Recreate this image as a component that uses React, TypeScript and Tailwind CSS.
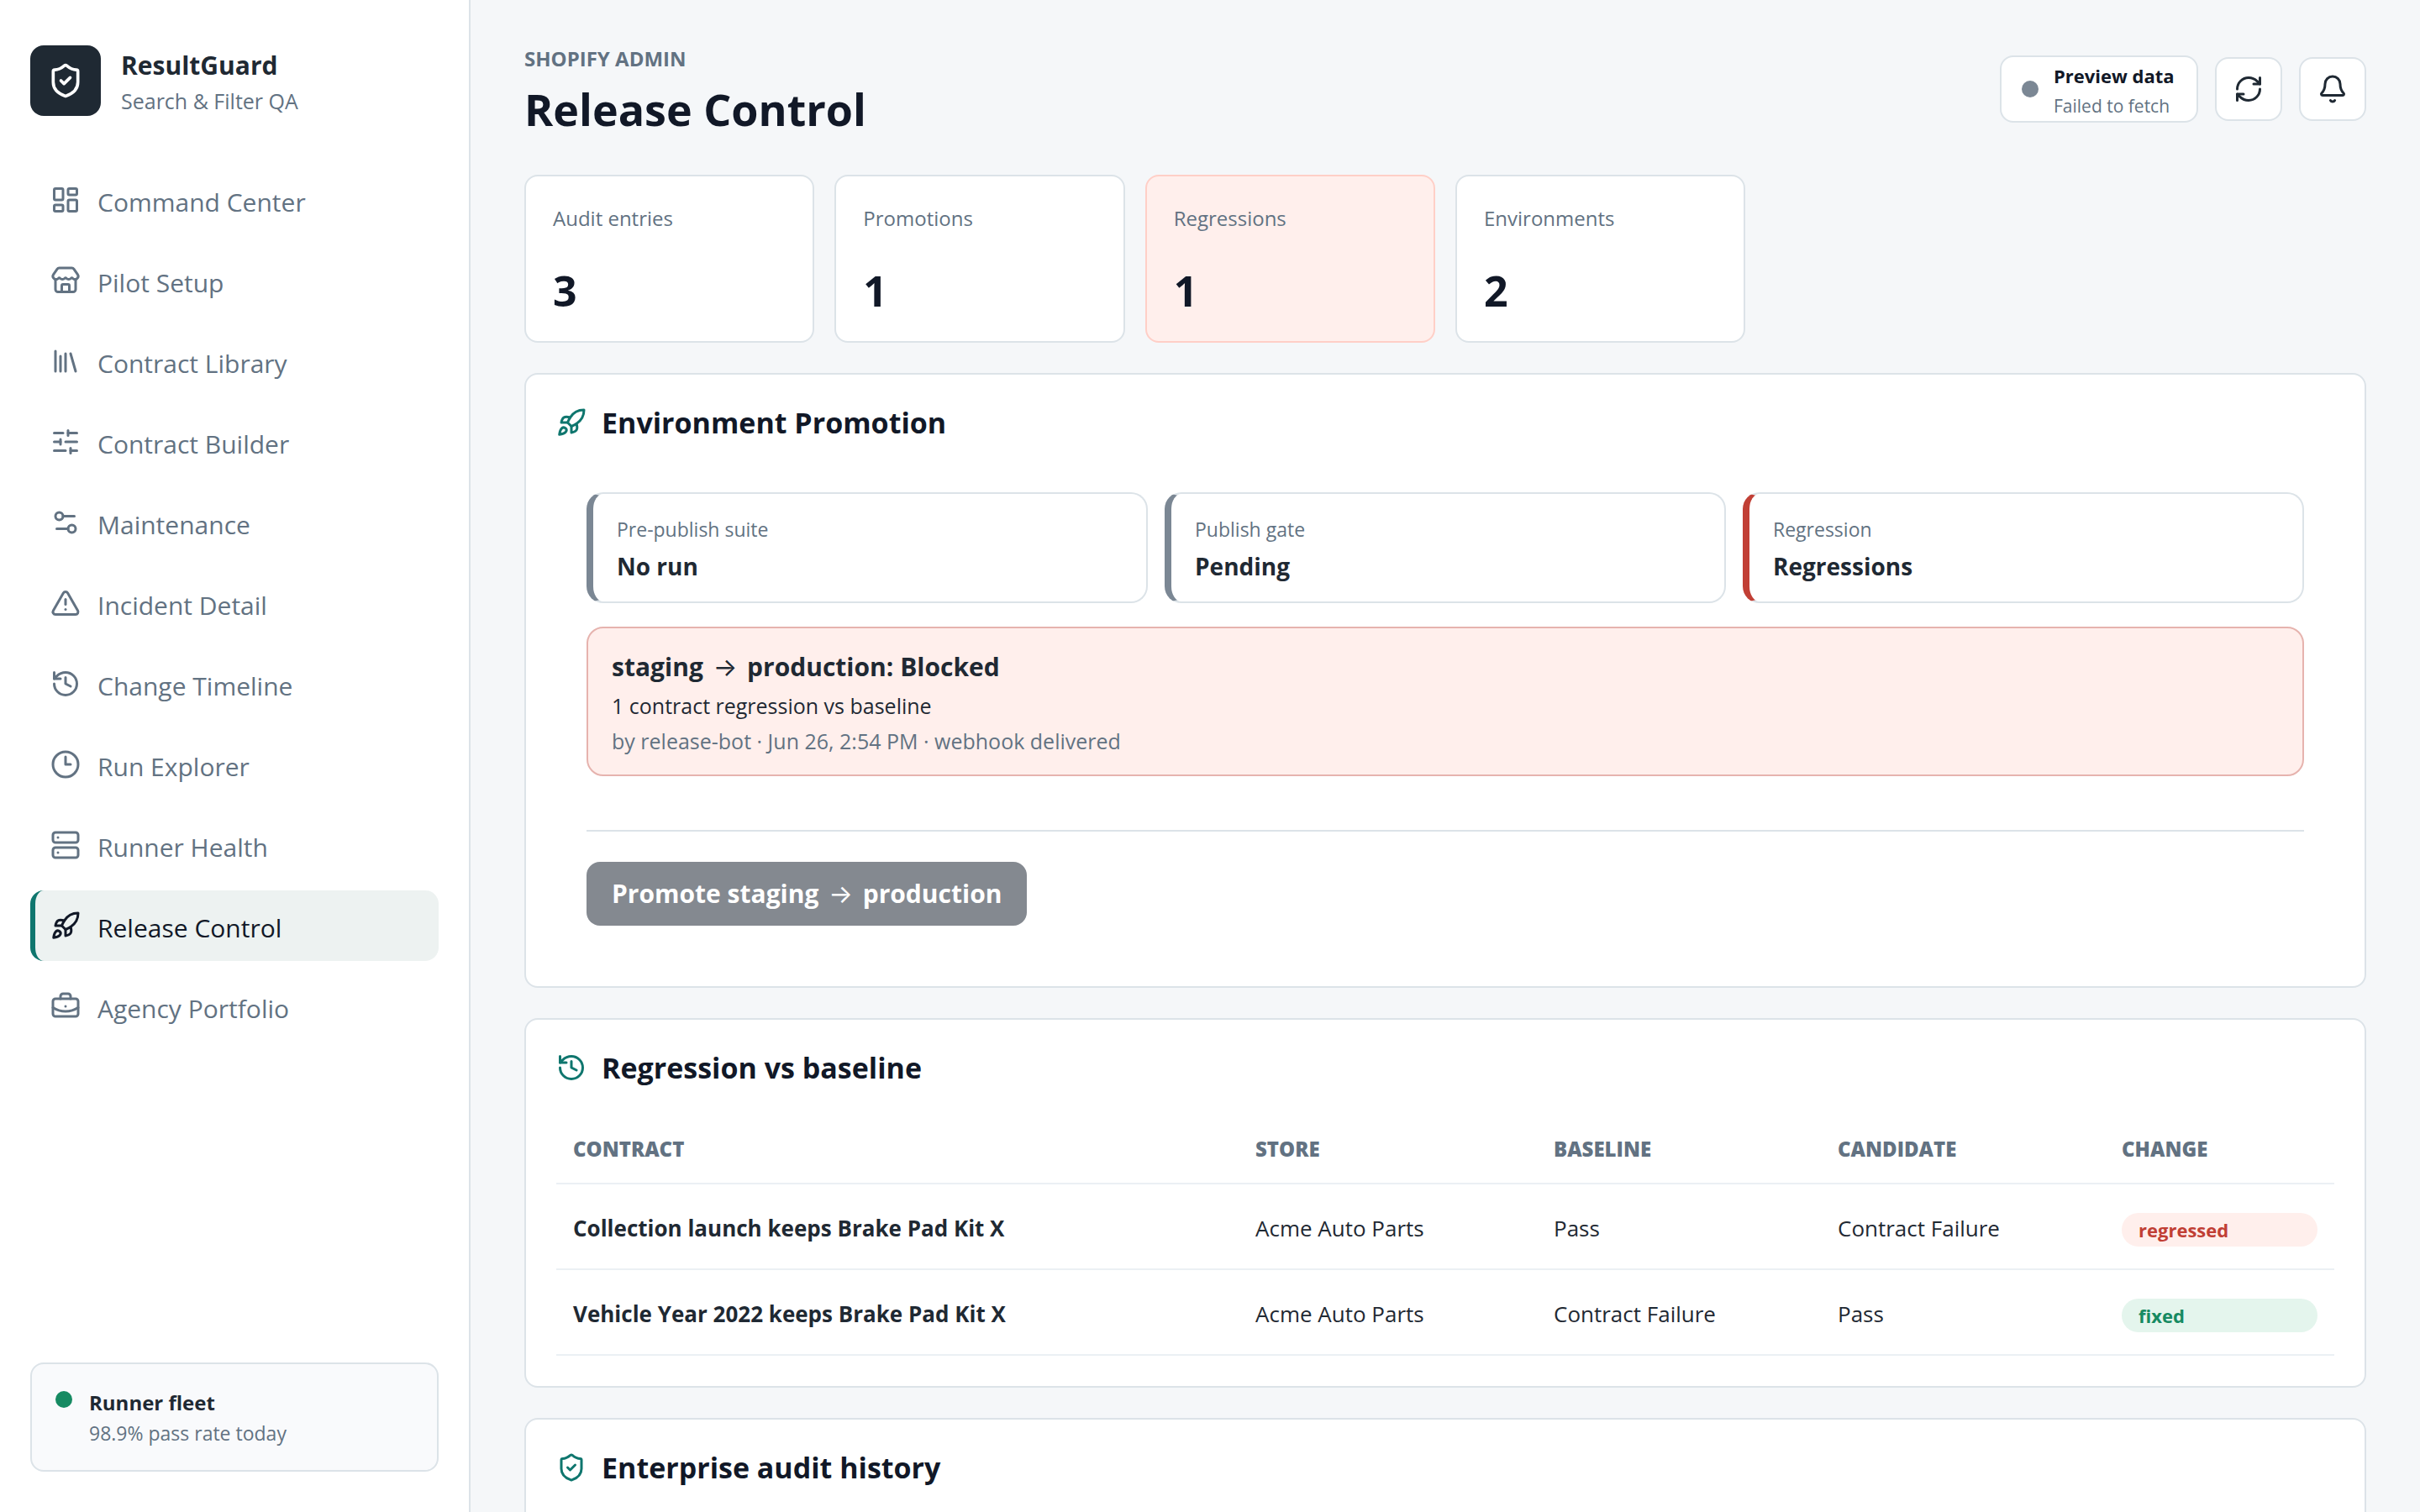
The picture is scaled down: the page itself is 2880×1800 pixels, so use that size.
import type { ReactNode } from "react";
import clsx from "clsx";
import {
  Bell,
  BriefcaseBusiness,
  Clock3,
  History,
  LayoutDashboard,
  Library,
  RefreshCw,
  Rocket,
  Server,
  Settings2,
  ShieldCheck,
  SlidersHorizontal,
  Store,
  TriangleAlert,
  type LucideIcon,
} from "lucide-react";

const navItems: Array<{ label: string; icon: LucideIcon }> = [
  { label: "Command Center", icon: LayoutDashboard },
  { label: "Pilot Setup", icon: Store },
  { label: "Contract Library", icon: Library },
  { label: "Contract Builder", icon: SlidersHorizontal },
  { label: "Maintenance", icon: Settings2 },
  { label: "Incident Detail", icon: TriangleAlert },
  { label: "Change Timeline", icon: History },
  { label: "Run Explorer", icon: Clock3 },
  { label: "Runner Health", icon: Server },
  { label: "Release Control", icon: Rocket },
  { label: "Agency Portfolio", icon: BriefcaseBusiness },
];

const stats = [
  { label: "Audit entries", value: 3 },
  { label: "Promotions", value: 1 },
  { label: "Regressions", value: 1, danger: true },
  { label: "Environments", value: 2 },
];

const gates = [
  { label: "Pre-publish suite", value: "No run" },
  { label: "Publish gate", value: "Pending" },
  { label: "Regression", value: "Regressions", danger: true },
];

const regressions = [
  {
    contract: "Collection launch keeps Brake Pad Kit X",
    store: "Acme Auto Parts",
    baseline: "Pass",
    candidate: "Contract Failure",
    change: "regressed",
  },
  {
    contract: "Vehicle Year 2022 keeps Brake Pad Kit X",
    store: "Acme Auto Parts",
    baseline: "Contract Failure",
    candidate: "Pass",
    change: "fixed",
  },
];

function Sidebar({ active }: { active: string }) {
  return (
    <aside className="flex w-[560px] shrink-0 flex-col border-r-2 border-[#dce3e8] bg-white px-9 pt-[54px] pb-12">
      <div className="flex gap-6">
        <div className="flex size-[84px] shrink-0 items-center justify-center rounded-2xl bg-[#1f2933] text-white">
          <ShieldCheck size={44} />
        </div>
        <div className="flex flex-col gap-0.5 pt-1">
          <strong className="text-[30px] leading-10 font-bold">ResultGuard</strong>
          <span className="text-[25px] leading-10 text-[#627282]">Search &amp; Filter QA</span>
        </div>
      </div>

      <nav className="mt-14 flex flex-col gap-3">
        {navItems.map(({ label, icon: Icon }) => (
          <button
            key={label}
            type="button"
            className={clsx(
              "flex h-[84px] items-center gap-5 rounded-2xl border-l-6 px-[18px] text-left text-[30px]",
              label === active
                ? "border-[#0f766e] bg-[#edf2f1] text-[#111827]"
                : "border-transparent text-[#627282]"
            )}>
            <Icon size={36} className="shrink-0" />
            <span className="pt-1">{label}</span>
          </button>
        ))}
      </nav>

      <div className="mt-auto flex gap-5 rounded-2xl border-2 border-[#dce3e8] bg-[#f9fafc] px-7 pt-7 pb-[26px]">
        <span className="mt-1 size-5 shrink-0 rounded-full bg-[#168a62]" />
        <div className="flex flex-col">
          <strong className="text-2xl leading-9 font-bold">Runner fleet</strong>
          <span className="text-[23px] leading-9 text-[#627282]">98.9% pass rate today</span>
        </div>
      </div>
    </aside>
  );
}

function Header() {
  return (
    <header className="flex items-center justify-between">
      <div className="flex flex-col gap-2.5 pt-0.5">
        <p className="text-2xl leading-9 font-bold text-[#627282] uppercase">Shopify Admin</p>
        <h1 className="text-[52px] leading-16 font-bold text-[#111827]">Release Control</h1>
      </div>
      <div className="flex items-center gap-5">
        <div className="flex h-20 min-w-[236px] items-center gap-[18px] rounded-2xl border-2 border-[#dce3e8] bg-white px-6">
          <span className="size-5 rounded-full bg-[#7b8794]" />
          <div className="flex flex-col pt-1">
            <strong className="text-[22px] leading-9 font-bold text-[#111827]">Preview data</strong>
            <span className="text-[21px] leading-9 text-[#627282]">Failed to fetch</span>
          </div>
        </div>
        <IconButton label="Refresh">
          <RefreshCw size={36} />
        </IconButton>
        <IconButton label="Notifications">
          <Bell size={36} />
        </IconButton>
      </div>
    </header>
  );
}

function IconButton({ label, children }: { label: string; children: ReactNode }) {
  return (
    <button
      type="button"
      aria-label={label}
      className="flex h-[76px] w-20 items-center justify-center rounded-2xl border-2 border-[#dce3e8] bg-white">
      {children}
    </button>
  );
}

function Arrow() {
  return <span className="mx-1 font-['Inter',sans-serif] font-normal">→</span>;
}

function Panel({
  title,
  icon: Icon,
  children,
}: {
  title: string;
  icon: LucideIcon;
  children?: ReactNode;
}) {
  return (
    <section className="shrink-0 rounded-2xl border-2 border-[#dce3e8] bg-white p-9">
      <div className="mb-[26px] flex items-center gap-[18px]">
        <Icon size={36} className="text-[#0f766e]" />
        <h2 className="text-[34px] leading-[42px] font-bold text-[#111827]">{title}</h2>
      </div>
      {children}
    </section>
  );
}

function Promotion() {
  return (
    <div className="p-9">
      <div className="grid grid-cols-3 gap-5">
        {gates.map((gate) => (
          <div
            key={gate.label}
            className={clsx(
              "flex flex-col gap-1.5 rounded-[20px] border-2 border-l-8 border-[#dce3e8] px-7 pt-6 pb-[22px]",
              gate.danger ? "border-l-[#c13f35]" : "border-l-[#7b8794]"
            )}>
            <span className="text-[23px] leading-9 text-[#627282]">{gate.label}</span>
            <strong className="text-[28px] leading-10 font-bold">{gate.value}</strong>
          </div>
        ))}
      </div>

      <div className="mt-7 flex flex-col gap-1.5 rounded-[20px] border-2 border-[#e6b3ae] bg-[#ffefec] px-7 pt-6 pb-[22px]">
        <strong className="text-[30px] leading-11 font-bold">
          staging <Arrow /> production: Blocked
        </strong>
        <p className="text-[25px] leading-9">1 contract regression vs baseline</p>
        <p className="text-[25px] leading-9 text-[#627282]">
          by release-bot · Jun 26, 2:54 PM · webhook delivered
        </p>
      </div>

      <div className="mt-16 border-t-2 border-[#dce3e8] pt-9">
        <button
          type="button"
          disabled
          className="h-[76px] rounded-2xl bg-[#848990] px-[30px] text-[30px] font-bold text-white">
          Promote staging <Arrow /> production
        </button>
      </div>
    </div>
  );
}

function RegressionTable() {
  return (
    <table className="w-full table-fixed border-separate border-spacing-0 text-left">
      <thead className="text-2xl leading-9 text-[#627282] uppercase">
        <tr>
          <th className="border-b-2 border-[#ebf0f4] px-5 pt-8 pb-[22px] font-extrabold">Contract</th>
          <th className="w-[355px] border-b-2 border-[#ebf0f4] px-5 pt-8 pb-[22px] font-extrabold">Store</th>
          <th className="w-[338px] border-b-2 border-[#ebf0f4] px-5 pt-8 pb-[22px] font-extrabold">Baseline</th>
          <th className="w-[338px] border-b-2 border-[#ebf0f4] px-5 pt-8 pb-[22px] font-extrabold">Candidate</th>
          <th className="w-[273px] border-b-2 border-[#ebf0f4] px-5 pt-8 pb-[22px] font-extrabold">Change</th>
        </tr>
      </thead>
      <tbody className="align-top text-[26px] leading-10">
        {regressions.map((row) => (
          <tr key={row.contract}>
            <td className="border-b-2 border-[#ebf0f4] px-5 pt-8 pb-7 font-bold">{row.contract}</td>
            <td className="border-b-2 border-[#ebf0f4] px-5 pt-8 pb-7">{row.store}</td>
            <td className="border-b-2 border-[#ebf0f4] px-5 pt-8 pb-7">{row.baseline}</td>
            <td className="border-b-2 border-[#ebf0f4] px-5 pt-8 pb-7">{row.candidate}</td>
            <td className="border-b-2 border-[#ebf0f4] px-5 pt-[34px] pb-[26px]">
              <span
                className={clsx(
                  "block rounded-full px-5 text-[22px] leading-10 font-bold",
                  row.change === "fixed" ? "bg-[#e4f5ed] text-[#168a62]" : "bg-[#ffefec] text-[#c13f35]"
                )}>
                {row.change}
              </span>
            </td>
          </tr>
        ))}
      </tbody>
    </table>
  );
}

export default function App() {
  return (
    <div className="flex h-screen overflow-hidden bg-[#f5f7f9] font-['Open_Sans',sans-serif] text-[#1f2933]">
      <Sidebar active="Release Control" />
      <main className="min-w-0 flex-1 overflow-hidden px-16 pt-[50px]">
        <Header />

        <div className="mt-[46px] grid grid-cols-6 gap-6">
          {stats.map((stat) => (
            <div
              key={stat.label}
              className={clsx(
                "flex flex-col gap-10 rounded-2xl border-2 p-8",
                stat.danger ? "border-[#ffcfc7] bg-[#ffefec]" : "border-[#dce3e8] bg-white"
              )}>
              <span className="text-2xl leading-9 text-[#627282]">{stat.label}</span>
              <strong className="text-[50px] leading-14 font-bold text-[#111827]">{stat.value}</strong>
            </div>
          ))}
        </div>

        <div className="mt-9 flex flex-col gap-9">
          <Panel title="Environment Promotion" icon={Rocket}>
            <Promotion />
          </Panel>
          <Panel title="Regression vs baseline" icon={History}>
            <RegressionTable />
          </Panel>
          <Panel title="Enterprise audit history" icon={ShieldCheck} />
        </div>
      </main>
    </div>
  );
}
